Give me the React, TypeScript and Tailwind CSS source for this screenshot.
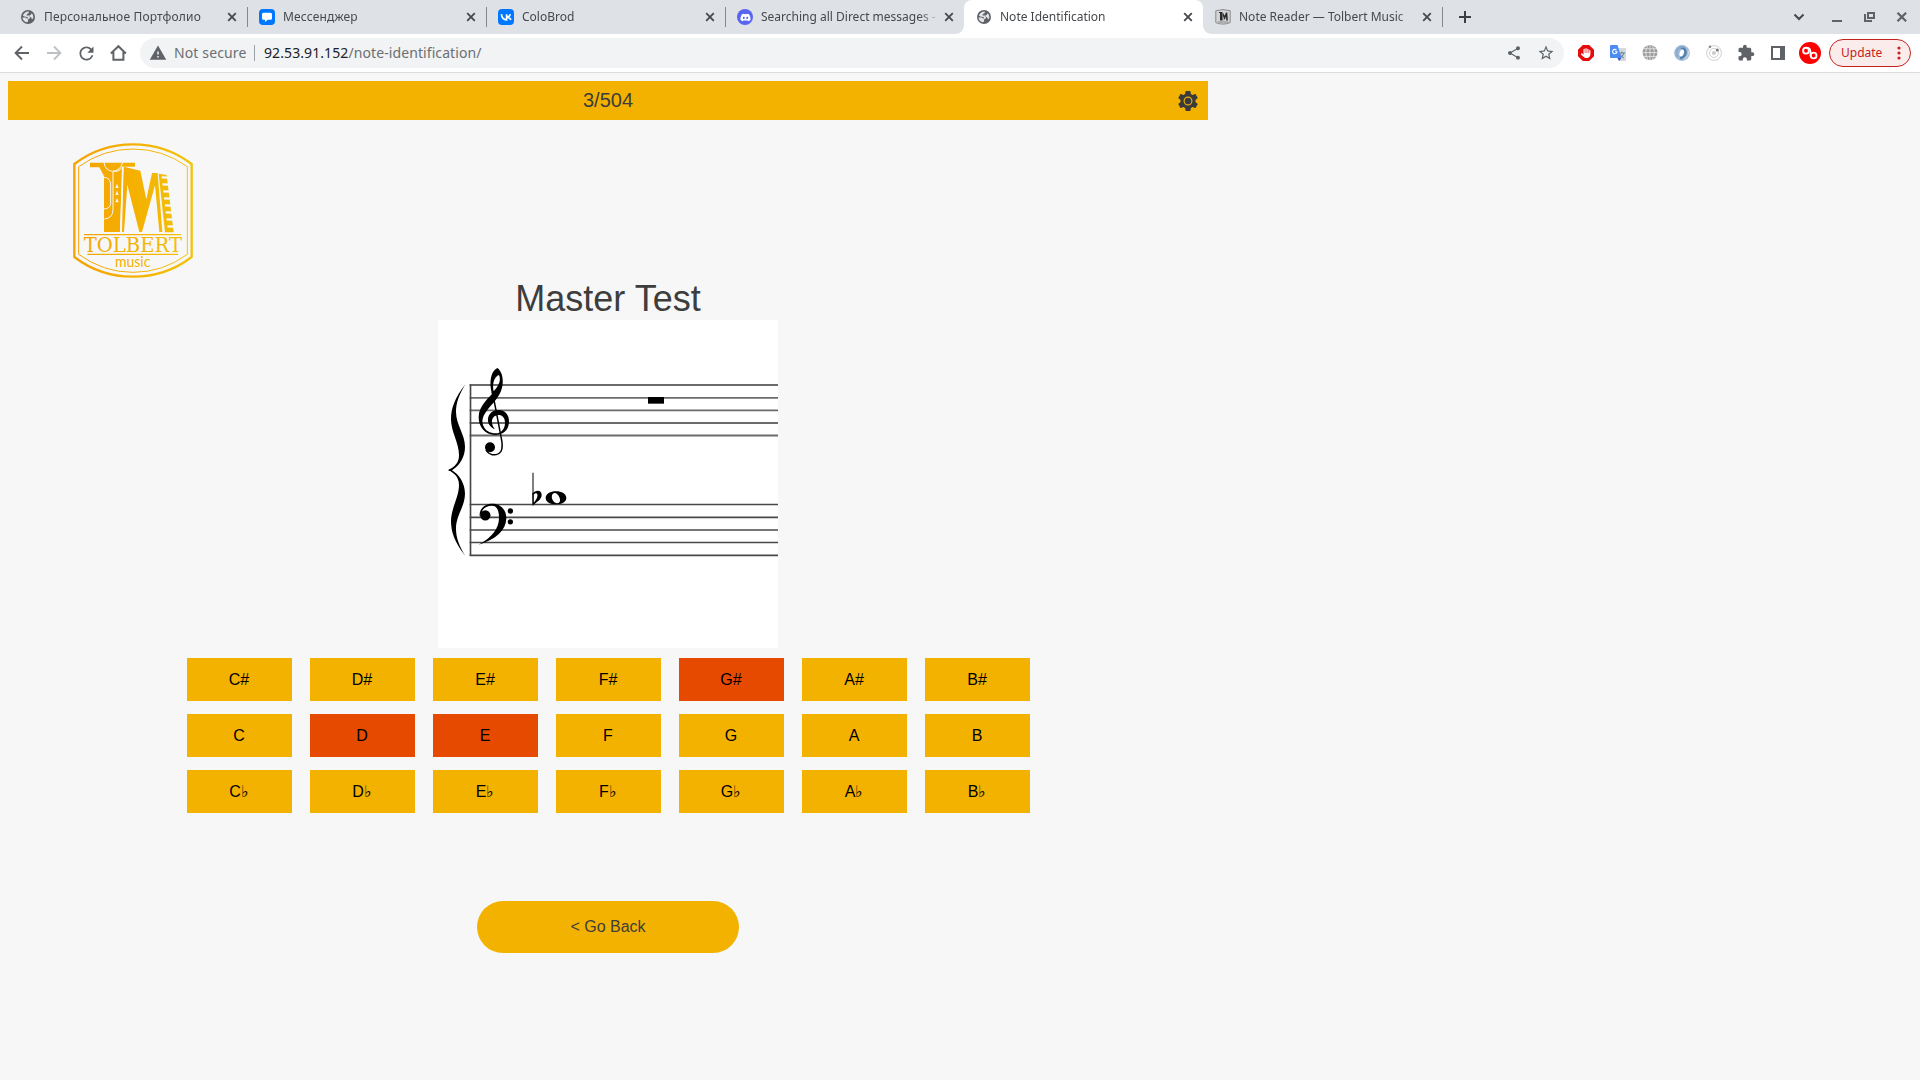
import React from "react";
import { MdShare, MdStarBorder, MdExtension, MdRefresh, MdWarning } from "react-icons/md";
import { FaDiscord, FaHand } from "react-icons/fa6";

const Globe = () => (
  <svg viewBox="0 0 16 16" className="size-4">
    <circle cx="8" cy="8" r="7" fill="#5f6368" />
    <path d="M8.800 2.600 8.600 4.200 6.900 4.900 6.600 6.400 8.800 6.500 10 8.200 9.600 9.600 8.200 10.200 7.900 12.800 7 13.300C4.400 12.900 2.600 10.800 2.500 8.400L5.900 8.400 6.900 9.600 7.900 9.400 7.900 8.300 6 7.700 4.300 7.500 2.900 6.600C3.700 4.200 5.900 2.500 8.800 2.600Z" fill="#e1e3e7" />
    <path d="M11.300 4.500 12.400 5.100c1 1.400 1.200 3.300.5 4.900l-1.500-.5-.3-1.300-1.500-.5-.2-1.400 1.600-.5Z" fill="#e1e3e7" />
  </svg>
);

const Messenger = () => (
  <svg viewBox="0 0 16 16" className="size-4">
    <rect width="16" height="16" rx="4" fill="#07f" />
    <path d="M4.500 3.700h7a1.500 1.500 0 0 1 1.500 1.500v4a1.500 1.500 0 0 1-1.500 1.500H8.800L6 13v-2.300H4.500A1.500 1.500 0 0 1 3 9.200v-4a1.500 1.500 0 0 1 1.500-1.500Z" fill="#fff" />
  </svg>
);

const Vk = () => (
  <svg viewBox="0 0 16 16" className="size-4">
    <rect width="16" height="16" rx="4" fill="#07f" />
    <path d="M3.400 5.200Q4 10.800 8.600 10.800V5.200M8.600 8.100Q11.400 8 12.400 5.200M8.600 8.100Q11.800 8.200 12.900 10.900" fill="none" stroke="#fff" strokeWidth="1.700" />
  </svg>
);

const Discord = () => (
  <span className="flex size-4 items-center justify-center rounded-full bg-[#5865f2]">
    <FaDiscord className="size-[11px] text-white" />
  </span>
);

const Tolbert = () => (
  <svg viewBox="0 0 16 16" className="size-4">
    <path d="M.8 1.700Q8-.5 15.200 1.700v11.900Q8 16.600.8 13.600Z" fill="#d3d4d6" stroke="#808285" strokeWidth=".9" />
    <path d="M4 3h3.200v8.500H5V4H4ZM7.600 3l2 3.800L11 3.500h1.300l.6 8h-1.600L11 7.500 9.600 11 8.200 7v4.500h-.600Z" fill="#2b2b2b" />
    <path d="M3 13h10" stroke="#8a8a8a" strokeWidth="1" />
  </svg>
);

const Close = () => (
  <svg viewBox="0 0 16 16" className="size-4">
    <path d="m4.200 4.200 7.600 7.600m0-7.600-7.600 7.600" stroke="#45484c" strokeWidth="1.800" />
  </svg>
);

type TabInfo = { title: string; icon: React.ReactNode; active?: boolean; sep?: boolean; wide?: boolean };

const tabs: TabInfo[] = [
  { title: "Персональное Портфолио", icon: <Globe />, sep: true, wide: true },
  { title: "Мессенджер", icon: <Messenger />, sep: true, wide: true },
  { title: "ColoBrod", icon: <Vk />, sep: true },
  { title: "Searching all Direct messages -", icon: <Discord /> },
  { title: "Note Identification", icon: <Globe />, active: true },
  { title: "Note Reader — Tolbert Music", icon: <Tolbert />, sep: true },
];

function Tab({ title, icon, active, sep, wide }: TabInfo) {
  return (
    <div className={active ? "relative flex h-[34px] w-[239px] items-center rounded-t-lg bg-white pl-3" : "relative flex h-[34px] w-[239px] items-center pl-3"}>
      {active && (
        <>
          <span className="absolute bottom-0 -left-2 size-2 bg-[radial-gradient(circle_at_0_0,#dee1e6_7.500px,white_8px)]" />
          <span className="absolute bottom-0 -right-2 size-2 bg-[radial-gradient(circle_at_100%_0,#dee1e6_7.500px,white_8px)]" />
        </>
      )}
      {icon}
      <span className="ml-2 w-[180px] whitespace-nowrap text-[12px] leading-4 text-[#45484c] [mask-image:linear-gradient(90deg,black_158px,transparent_180px)]">
        <span className={wide ? "tracking-[0.15px]" : "tracking-normal"}>{title}</span>
      </span>
      <Close />
      {sep && <span className="absolute -right-px top-[7px] h-5 w-px bg-[#85878b]" />}
    </div>
  );
}

function TabStrip() {
  return (
    <div className="flex h-[34px] bg-[#dee1e6] pl-2">
      {tabs.map((t) => <Tab key={t.title} {...t} />)}
      <svg viewBox="0 0 16 16" className="ml-[15px] mt-[9px] size-4">
        <path d="M8 2v12M2 8h12" stroke="#3c4043" strokeWidth="2" />
      </svg>
      <svg viewBox="0 0 130 34" className="ml-auto h-[34px] w-[130px]" fill="none" stroke="#5f6368">
        <path d="m4.500 14.500 4.500 4.500 4.500-4.500" stroke="#45484c" strokeWidth="2" />
        <path d="M42 21h10" strokeWidth="2" />
        <path d="M78 13h6v5h-6Z" strokeWidth="2" />
        <path d="M75 14v7h7" strokeWidth="2" />
        <path d="m107.500 12.700 8.600 8.600m0-8.600-8.600 8.600" strokeWidth="2.200" />
      </svg>
    </div>
  );
}

function Toolbar() {
  return (
    <div className="flex h-[39px] items-center border-b border-[#dadce0] bg-white pl-3 pr-[9px]">
      <svg viewBox="0 0 20 20" className="size-5" fill="none" stroke="#5f6368" strokeWidth="1.900"><path d="M17 10H4m6-6.500L3.600 10l6.400 6.500" /></svg>
      <svg viewBox="0 0 20 20" className="ml-3 size-5" fill="none" stroke="#bdc1c6" strokeWidth="1.900"><path d="M3 10h13m-6-6.500 6.400 6.500-6.400 6.500" /></svg>
      <MdRefresh className="ml-3 size-[21px] text-[#5f6368]" />
      <svg viewBox="0 0 20 20" className="ml-[11px] size-5" fill="none" stroke="#5f6368" strokeWidth="2"><path d="M2.900 10.500 10.400 3.200l7.500 7.300M5.400 9v7.800h10V9" /></svg>
      <div className="ml-3 flex h-[30px] w-[1424px] items-center rounded-full bg-[#f1f3f4] pl-[9px] text-[14px] leading-5 text-[#6b6f73]">
        <MdWarning className="size-[18px] text-[#5f6368]" />
        <span className="ml-[7px] w-[73px] whitespace-nowrap tracking-[0.13px]">Not secure</span>
        <span className="ml-[7px] h-4 w-px bg-[#9aa0a6]" />
        <span className="ml-[9px] whitespace-nowrap tracking-[0.090px]"><span className="text-[#202124]">92.53.91.152</span>/note-identification/</span>
        <MdShare className="ml-auto size-4 text-[#5f6368]" />
        <MdStarBorder className="ml-[15px] mr-[9px] size-[18px] text-[#5f6368]" />
      </div>
      <span className="ml-[14px] flex size-4 items-center justify-center bg-[#e40d0d] [clip-path:polygon(30%_0,70%_0,100%_30%,100%_70%,70%_100%,30%_100%,0_70%,0_30%)]">
        <FaHand className="size-[10px] text-white" />
      </span>
      <svg viewBox="0 0 16 16" className="ml-4 size-4">
        <path d="M6 3h9q1 0 1 1v11q0 1-1 1H9Z" fill="#d5d8dc" />
        <path d="M9.500 8h5.500M12 6.500V8m2 0q-1 3.500-4 4.500m.5-3q1 2.500 3.500 3.500" stroke="#607d8b" strokeWidth="1" fill="none" />
        <path d="M1 0h6.500L11.500 13H1q-1 0-1-1V1q0-1 1-1Z" fill="#4c8bf5" />
        <path d="m7.500 13 4 0-2.500 3Z" fill="#3653c9" />
        <path d="M6.500 5.200a2.200 2.200 0 1 0 .5 1.500H5" fill="none" stroke="#fff" strokeWidth="1.100" />
      </svg>
      <svg viewBox="0 0 16 16" className="ml-4 size-4">
        <circle cx="8" cy="7.600" r="7.500" fill="#9a9a9a" />
        <path d="M8 0v15.200M0 7.600h16M1.500 3.800h13M1.500 11.400h13M6 0Q1.500 7.600 6 15.200M10 0q4.500 7.600 0 15.200" fill="none" stroke="#eee" strokeWidth=".8" />
      </svg>
      <svg viewBox="0 0 16 16" className="ml-4 size-4" fill="none">
        <circle cx="8" cy="8" r="7.900" fill="#a0bbd8" />
        <path d="M6.500 2.800C10.500 2.500 12.500 6 11.200 9.300Q9.800 12.500 6 13.200" stroke="#557fae" strokeWidth="2.400" />
        <path d="M9.500 2.200Q5 1.500 3.200 5.200q-1.600 4 .8 6.800" stroke="#86a8cd" strokeWidth="1.800" />
        <path d="M14.300 6q1 5-4 7.800" stroke="#d8e4f0" strokeWidth="1" />
        <ellipse cx="7.700" cy="8" rx="2" ry="3.500" fill="#fff" transform="rotate(20 7.700 8)" />
      </svg>
      <svg viewBox="0 0 16 16" className="ml-4 size-4" fill="none" stroke="#d0d0d0">
        <circle cx="8" cy="8" r="7.400" /><circle cx="8" cy="8" r="4.500" />
        <circle cx="8" cy="8" r="2" fill="#ccc" stroke="none" />
        <circle cx="11.300" cy="5" r="1.500" fill="#777" stroke="none" />
        <circle cx="4" cy="1.700" r="1.300" fill="#888" stroke="none" />
      </svg>
      <MdExtension className="ml-[15px] size-[18px] text-[#5f6368]" />
      <svg viewBox="0 0 14 14" className="ml-4 size-[14px]"><path d="M0 0h14v14H0Zm2 2v10h7V2Z" fill="#5f6368" fillRule="evenodd" /></svg>
      <svg viewBox="0 0 22 22" className="ml-[14px] size-[22px]" fill="none" stroke="#fff">
        <circle cx="11" cy="11" r="11" fill="#f00" stroke="none" />
        <circle cx="7" cy="8.700" r="2.900" strokeWidth="1.900" />
        <circle cx="14.600" cy="13.500" r="2.900" strokeWidth="1.900" />
        <path d="M8 5.900q3.500-.2 3.500 3.600v4.500" strokeWidth="1.600" />
      </svg>
      <div className="ml-2 flex h-7 w-[82px] items-center rounded-full border border-[#c5221f] bg-[#faeceb] pl-[11px] text-[12px] text-[#c5221f]">
        <span className="w-[41px]">Update</span>
        <svg viewBox="0 0 4 14" className="ml-[15px] h-[14px] w-1 fill-[#c5221f]"><circle cx="2" cy="2" r="1.600" /><circle cx="2" cy="7" r="1.600" /><circle cx="2" cy="12" r="1.600" /></svg>
      </div>
    </div>
  );
}

const Gear = () => (
  <svg viewBox="0 0 24 24" className="size-6">
    <path fill="#3a3a3a" d="M19.430 12.980c.04-.32.070-.64.070-.98s-.03-.66-.07-.98l2.110-1.650c.19-.15.240-.42.120-.64l-2-3.460c-.12-.22-.39-.3-.61-.22l-2.490 1c-.52-.4-1.080-.73-1.690-.98l-.38-2.650A.488.488 0 0 0 14 2h-4c-.25 0-.46.180-.49.420l-.38 2.650c-.61.250-1.170.590-1.690.98l-2.490-1c-.23-.09-.49 0-.61.220l-2 3.460c-.13.220-.07.490.12.640l2.110 1.650c-.04.320-.07.650-.07.980s.03.660.07.980l-2.110 1.650c-.19.150-.24.420-.12.640l2 3.460c.12.220.39.300.61.220l2.490-1c.52.400 1.080.730 1.690.98l.38 2.650c.03.240.24.420.49.420h4c.25 0 .46-.18.490-.42l.38-2.650c.61-.25 1.170-.59 1.690-.98l2.490 1c.23.090.49 0 .61-.22l2-3.460c.12-.22.070-.49-.12-.64z" />
    <circle cx="12" cy="12" r="3.900" fill="none" stroke="#f4b200" strokeWidth="1.100" />
  </svg>
);

const keyGaps = [142, 163, 184, 205, 226, 247, 268, 289];

const Logo = () => (
  <svg viewBox="69 39 360 405" className="ml-[65px] mt-[23px] h-[135px] w-[120px]">
    <defs>
      <linearGradient id="gold" gradientUnits="userSpaceOnUse" x1="69" y1="0" x2="429" y2="0">
        <stop offset="0" stopColor="#f4a207" /><stop offset=".5" stopColor="#f5b000" /><stop offset="1" stopColor="#f1c40c" />
      </linearGradient>
    </defs>
    <g fill="none" stroke="url(#gold)">
      <path strokeWidth="7" d="M73 102Q150 43 249 43T425 102V381Q348 440 249 440T73 381Z" />
      <path strokeWidth="3" d="M86 110Q160 57 249 57T412 110V373Q338 427 249 427T86 373Z" />
      <path strokeWidth="3.500" d="M102 314H393M112 373H384" />
    </g>
    <g fill="url(#gold)">
      <path d="M120 98H255V110H217L210 306H162V138L148 112H120Z" />
      <path d="M221 110 271 122 289 208 306 129 323 129 337 306H328L315 166 276 306H268L232 164 222 306H216Z" />
      <path d="M326 131 350 135 371 307H345Z" />
    </g>
    <g fill="none" stroke="#f7f7f7" strokeWidth="3">
      <path d="M162 98Q166 122 188 124Q211 122 218 98M189 124V238Q189 265 163 267M190 123Q206 128 216 112M162 142Q182 143 182 165V220Q181 236 162 237" />
      <path d="M218 110 212 306" strokeWidth="4" />
      {keyGaps.map((y) => {
        const x = 335 + (y - 142) * 0.117;
        return <path key={y} d={`M${x} ${y}l22 1`} strokeWidth="7" />;
      })}
    </g>
    <path d="m201 161 5 13h-10Zm0 21 5 13h-10Zm0 22 5 13h-10Z" fill="#f7f7f7" />
    <text x="101" y="366" textLength="295" lengthAdjust="spacingAndGlyphs" fill="url(#gold)" fontFamily="'DejaVu Serif', serif" fontSize="60">TOLBERT</text>
    <text x="195" y="411" textLength="106" lengthAdjust="spacingAndGlyphs" fill="url(#gold)" fontFamily="Lato, sans-serif" fontSize="43">music</text>
  </svg>
);

const brace = "M106 343C74 385 63 415 63 448C63 485 87 520 87 556C87 578 74 592 55 600C58 604 60 604 64 602C90 586 105 560 105 530C105 492 78 465 78 425C78 398 88 373 106 343Z";

const Staff = () => (
  <svg viewBox="24 150 1020 984" className="h-[328px] w-[340px] bg-white">
    <g stroke="#6b6b6b" strokeWidth="5.500">
      {[345, 383.500, 421, 459, 496.500].map((y) => <path key={y} d={`M119 ${y}H1044`} />)}
    </g>
    <g stroke="#484848" strokeWidth="4.800">
      {[703.500, 742, 780, 817.500, 856].map((y) => <path key={y} d={`M119 ${y}H1044`} />)}
      <path d="M121.500 343V858" strokeWidth="5" />
    </g>
    <path d={brace} />
    <path d={brace} transform="matrix(1 0 0 -1 0 1201)" />
    <path d="M654 381h48v20h-48Z" />
    <path fillRule="evenodd" d="M186 372C176 335 183 303 202 294C213 301 220 320 218 342C215 375 190 398 176 415C160 435 154 449 159 465C165 482 180 490 198 490C214 490 225 476 225 458C225 443 216 435 206 435C193 435 184 446 186 458C187 467 191 472 195 478C180 472 173 460 174 447C175 430 190 420 206 420C226 420 238 436 237 456C236 480 220 495 195 495C165 494 145 470 146 440C147 408 175 385 186 372ZM191 364C206 348 214 332 207 315C193 320 186 340 191 364Z" />
    <path d="M187 366Q189 382 194 400L213 500Q220 532 213 544Q203 557 187 554Q174 551 168 540" fill="none" stroke="#000" strokeWidth="4.500" />
    <circle cx="180" cy="532" r="15" />
    <g transform="translate(0 540)">
      <path d="M149 199C147 176 164 161 187 161C213 161 229 180 229 205C228 242 198 268 146 284C188 260 207 235 207 203C207 180 200 167 186 167C170 167 159 174 156 186Z" />
      <circle cx="166" cy="196" r="15.500" />
      <circle cx="241" cy="183" r="8" /><circle cx="241" cy="215.500" r="8" />
      <path d="M309 68V166" stroke="#555" strokeWidth="4.500" />
      <path fillRule="evenodd" d="M307 130C318 119 335 120 335 134C335 148 322 154 308 167ZM311 134V158C321 147 325 136 321 131C318 128 314 130 311 134Z" />
      <path fillRule="evenodd" d="M347 144C347 132 361 124 378 124S409 132 409 144S395 163 378 163S347 156 347 144ZM368 132C361 142 369 157 380 160C391 161 392 150 388 142C384 131 374 125 368 132Z" />
    </g>
  </svg>
);

const notes = ["C", "D", "E", "F", "G", "A", "B"];
const answers = ["#", "", "♭"].flatMap((s) => notes.map((n) => n + s));
const wrong = ["G#", "D", "E"];

export default function App() {
  return (
    <div className="flex h-[1080px] w-[1920px] flex-col overflow-hidden bg-[#f7f7f7] font-['Noto_Sans',sans-serif]">
      <TabStrip />
      <Toolbar />
      <main className="flex w-[1216px] flex-col px-2 pt-2 font-['Liberation_Sans',sans-serif] text-[#3d3d3d]">
        <header className="flex h-[39px] items-center bg-[#f4b200]">
          <span className="mb-0.5 ml-8 flex-1 text-center text-[20px] leading-6">3/504</span>
          <button className="mr-2 flex size-6 items-center justify-center"><Gear /></button>
        </header>
        <Logo />
        <div className="flex flex-col items-center">
          <h1 className="text-[36px] leading-[42px]">Master Test</h1>
          <Staff />
          <div className="mt-[10px] grid grid-cols-[repeat(7,105px)] gap-x-[18px] gap-y-[13px] text-[16px] text-black">
            {answers.map((a) => (
              <button key={a} className={wrong.includes(a) ? "h-[43px] bg-[#e64a00]" : "h-[43px] bg-[#f4b200]"}>{a}</button>
            ))}
          </div>
          <button className="mt-[88px] h-[52px] w-[262px] rounded-full bg-[#f4b200] text-[16px]">&lt; Go Back</button>
        </div>
      </main>
    </div>
  );
}
